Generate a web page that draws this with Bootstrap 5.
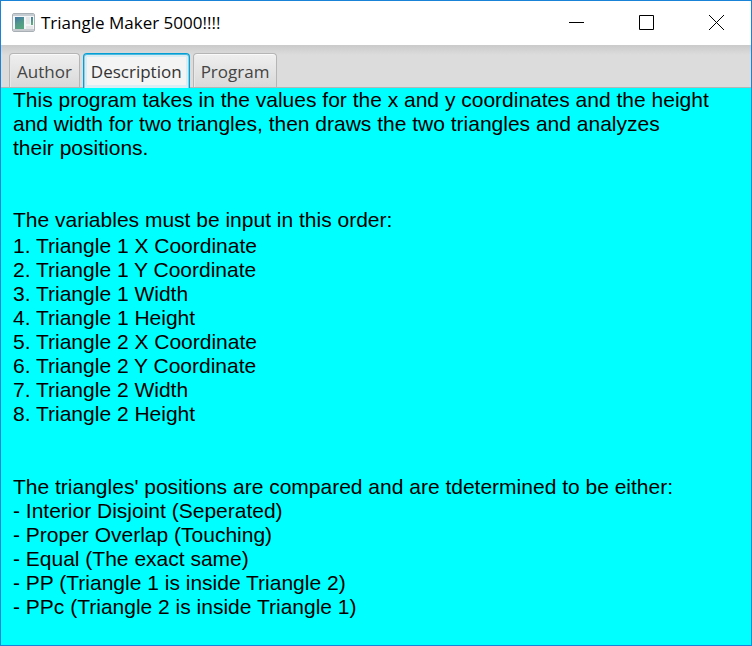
<!DOCTYPE html>
<html lang="en">
<head>
<meta charset="utf-8">
<meta name="viewport" content="width=device-width, initial-scale=1">
<title>Triangle Maker 5000!!!!</title>
<link href="https://cdn.jsdelivr.net/npm/bootstrap@5.3.0/dist/css/bootstrap.min.css" rel="stylesheet">
<style>
body { font-family: "Open Sans", "Noto Sans", sans-serif; color: #000; background: #fff; }
.app-window { border: 1px solid #1883d7; }
.title-bar { height: 44px; padding-left: 11px; }
.app-icon { margin-bottom: 2px; }
.app-name { font-size: 17px; line-height: 24px; margin-left: 6px; font-weight: 400; }
.win-btn { width: 70px; height: 43px; border: 0; padding: 0; background: transparent; }
.win-btn:hover { background: #e5e5e5; }
.tab-strip {
  height: 43px; padding: 0 8px; gap: 3px;
  background: linear-gradient(#cacaca, #dcdcdc 10px, #dcdcdc);
  border-bottom: 1px solid #b5b5b5;
}
.tab-strip .tab-btn {
  height: 34px; padding: 3px 7px 0; line-height: 26px; font-size: 17px; white-space: nowrap;
  color: #444; border: 1px solid #b5b5b5; border-bottom: 0; border-radius: 4px 4px 0 0;
  background: linear-gradient(#efefef, #d9d9d9);
  box-shadow: inset 0 1px 0 #fafafa, inset 1px 0 0 #e8e8e8;
}
.tab-strip .tab-btn.active {
  height: 35px; margin-bottom: -1px; padding-bottom: 1px; color: #333;
  border: 1px solid #039ed3; border-bottom: 0; background: #f4f4f4;
  box-shadow: inset 0 1px 0 #4bb9de, inset 1px 0 0 #8acfe8, inset -1px 0 0 #8acfe8, inset 0 0 0 3px #d9edf5;
}
.info-pane {
  background: #0ff; padding: 0 12px;
  font-family: "Liberation Sans", Arial, sans-serif; font-size: 21px; line-height: 24px;
}
.info-pane p { margin: 0; }
.info-pane .intro { margin-bottom: 48px; }
.info-pane .variables { margin: 2px 0 49px; }
</style>
</head>
<body>
<div class="app-window d-flex flex-column min-vh-100">
  <header class="title-bar d-flex align-items-center flex-shrink-0">
    <svg class="app-icon" width="23" height="19" viewBox="0 0 23 19" aria-hidden="true">
      <defs><linearGradient id="pane" x1="0" y1="0" x2="0.4" y2="1"><stop offset="0" stop-color="#3f74a6"/><stop offset="1" stop-color="#61b07b"/></linearGradient></defs>
      <rect x=".5" y=".5" width="22" height="18" rx="1.5" fill="#f4f5f6" stroke="#a9b0b5"/>
      <path d="M1 1h21v2H1z" fill="#c6cdd2"/>
      <path d="M1 17h21" stroke="#c8ccd0" stroke-width="2"/>
      <rect x="3" y="4" width="9" height="12" fill="url(#pane)"/>
      <path d="M3 15 12 6v10H3z" fill="#4c9a85" opacity=".5"/>
      <path d="M14 4h4v7h-4zM14 13h7v3h-7z" fill="#e5e6e7"/>
      <rect x="19" y="4" width="2" height="8" fill="url(#pane)"/>
    </svg>
    <h1 class="app-name mb-0 me-auto">Triangle Maker 5000!!!!</h1>
    <div class="d-flex align-self-start">
      <button type="button" class="win-btn" aria-label="Minimize"><svg class="d-block mx-auto" width="15" height="15" viewBox="0 0 15 15"><path d="M0 7.500h15" stroke="#000"/></svg></button>
      <button type="button" class="win-btn" aria-label="Maximize"><svg class="d-block mx-auto" width="15" height="15" viewBox="0 0 15 15"><path d="M.5.5h14v14H.5z" fill="none" stroke="#000"/></svg></button>
      <button type="button" class="win-btn" aria-label="Close"><svg class="d-block mx-auto" width="15" height="15" viewBox="0 0 15 15"><path d="M0 0 15 15M15 0 0 15" stroke="#000"/></svg></button>
    </div>
  </header>
  <div class="tab-strip d-flex align-items-end flex-shrink-0" role="tablist">
    <button type="button" class="tab-btn" role="tab" aria-selected="false">Author</button>
    <button type="button" class="tab-btn active" role="tab" id="tab-description" aria-controls="description" aria-selected="true">Description</button>
    <button type="button" class="tab-btn" role="tab" aria-selected="false">Program</button>
  </div>
  <main class="info-pane flex-grow-1" id="description" role="tabpanel" aria-labelledby="tab-description">
    <p class="intro">This program takes in the values for the x and y coordinates and the height<br>and width for two triangles, then draws the two triangles and analyzes<br>their positions.</p>
    <p>The variables must be input in this order:</p>
    <div class="variables">
      <div>1. Triangle 1 X Coordinate</div>
      <div>2. Triangle 1 Y Coordinate</div>
      <div>3. Triangle 1 Width</div>
      <div>4. Triangle 1 Height</div>
      <div>5. Triangle 2 X Coordinate</div>
      <div>6. Triangle 2 Y Coordinate</div>
      <div>7. Triangle 2 Width</div>
      <div>8. Triangle 2 Height</div>
    </div>
    <p>The triangles' positions are compared and are tdetermined to be either:</p>
    <div>- Interior Disjoint (Seperated)</div>
    <div>- Proper Overlap (Touching)</div>
    <div>- Equal (The exact same)</div>
    <div>- PP (Triangle 1 is inside Triangle 2)</div>
    <div>- PPc (Triangle 2 is inside Triangle 1)</div>
  </main>
</div>
<script src="https://cdn.jsdelivr.net/npm/bootstrap@5.3.0/dist/js/bootstrap.bundle.min.js"></script>
</body>
</html>
